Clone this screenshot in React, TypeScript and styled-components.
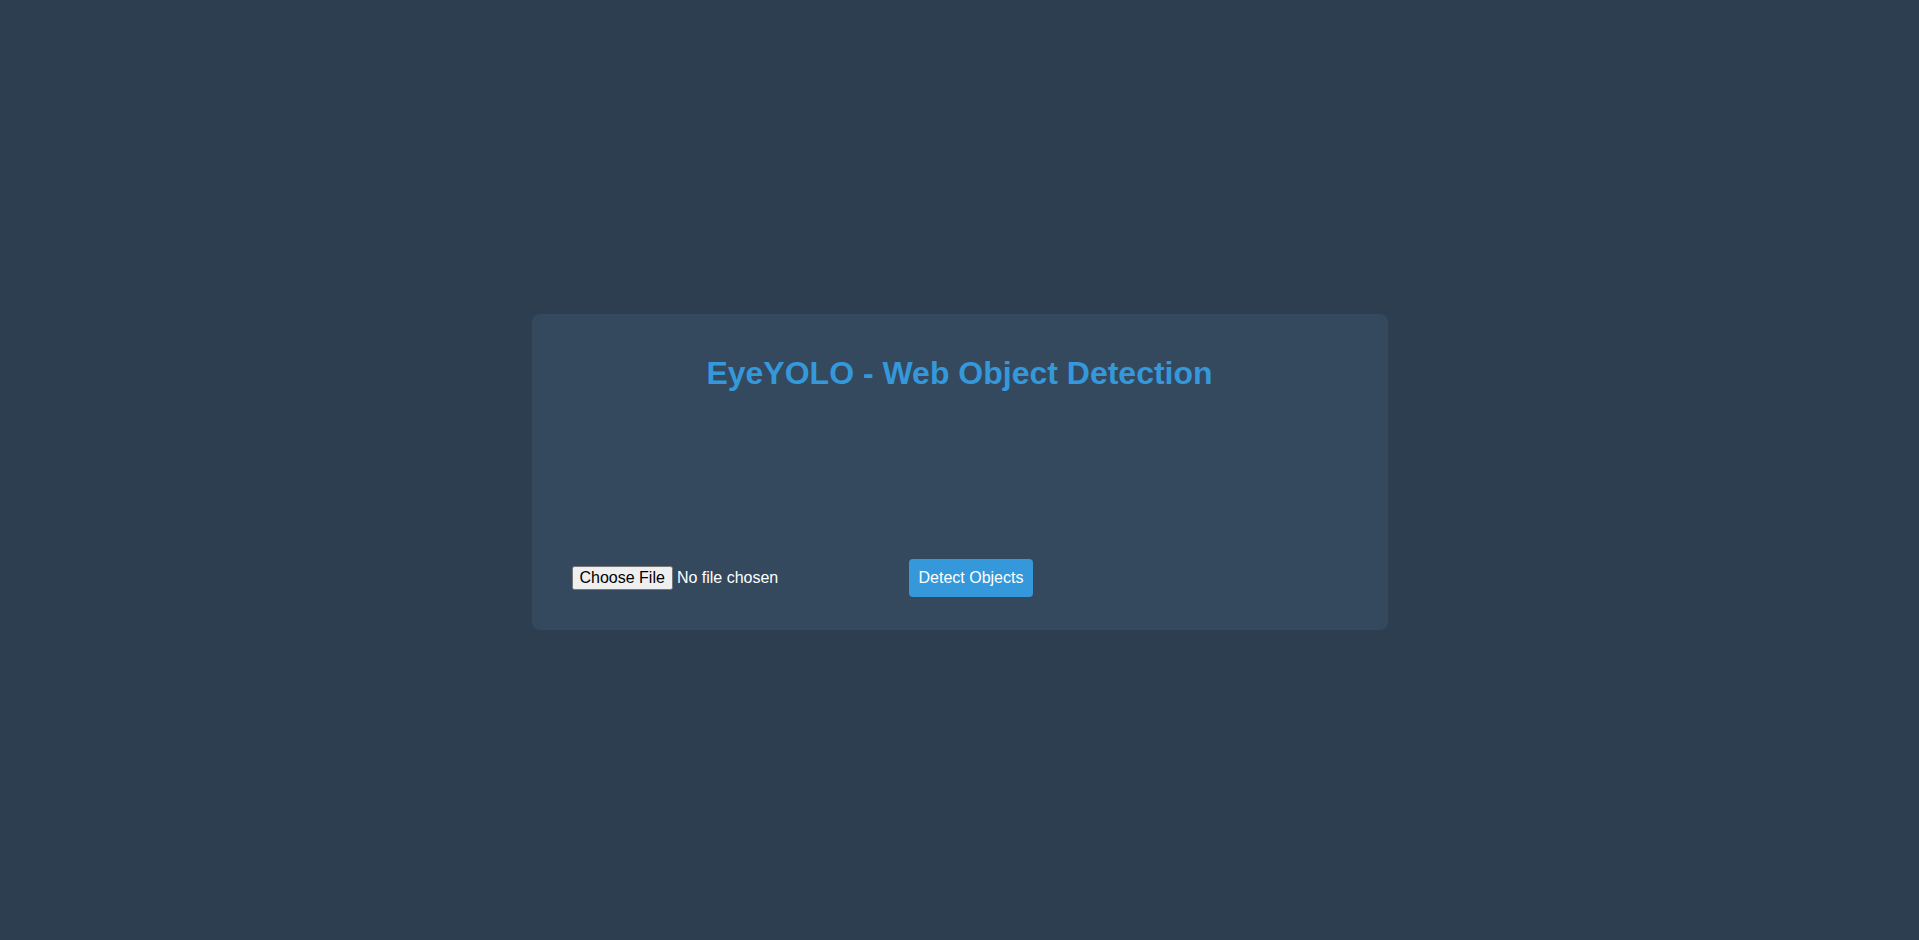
import React from "react";
import styled, { createGlobalStyle } from "styled-components";

const GlobalStyle = createGlobalStyle`
  html, body {
    margin: 0;
    padding: 0;
    height: 100%;
  }
  body {
    background: #2c3e50;
    font-family: "Liberation Sans", Arial, sans-serif;
    color: #ecf0f1;
  }
  #root {
    min-height: 100vh;
  }
`;

const Page = styled.main`
  min-height: 940px;
  display: flex;
  align-items: center;
  justify-content: center;
`;

const Card = styled.section`
  width: 856px;
  box-sizing: border-box;
  background: #34495e;
  border-radius: 8px;
  padding: 20px 40px 33px;
  margin-top: 4px;
`;

const Title = styled.h1`
  margin: 21px 0;
  text-align: center;
  font-size: 32px;
  font-weight: bold;
  color: #3498db;
  line-height: 37px;
`;

const Preview = styled.div`
  height: 146px;
`;

const Controls = styled.form`
  display: flex;
  align-items: center;
  gap: 10px;
`;

const FileInput = styled.input`
  width: 316px;
  font-family: "Liberation Sans", Arial, sans-serif;
  font-size: 16px;
  color: #ffffff;
  &::file-selector-button {
    font-family: "Liberation Sans", Arial, sans-serif;
    font-size: 16px;
  }
`;

const DetectButton = styled.button`
  background: #3498db;
  color: #ffffff;
  border: none;
  border-radius: 4px;
  padding: 10px 10px;
  height: 38px;
  margin-left: 11px;
  font-family: "Liberation Sans", Arial, sans-serif;
  font-size: 16px;
  cursor: pointer;
`;

export default function App() {
  return (
    <>
      <GlobalStyle />
      <Page>
        <Card>
          <Title>EyeYOLO - Web Object Detection</Title>
          <Preview />
          <Controls onSubmit={(e) => e.preventDefault()}>
            <FileInput type="file" accept="image/*" />
            <DetectButton type="submit">Detect Objects</DetectButton>
          </Controls>
        </Card>
      </Page>
    </>
  );
}
